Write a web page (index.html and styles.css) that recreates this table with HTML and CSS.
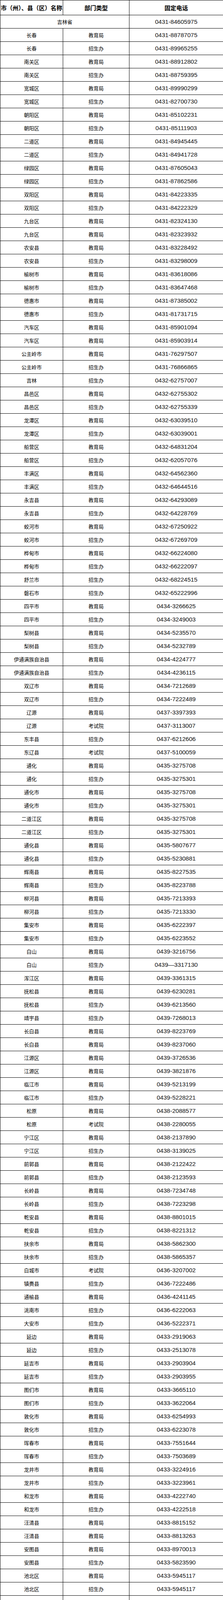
FILE: index.html
```html
<!DOCTYPE html>
<html lang="zh-CN">
<head>
<meta charset="utf-8">
<title>吉林省教育部门联系电话</title>
<link rel="stylesheet" href="styles.css">
</head>
<body>
<table class="contacts">
<colgroup><col class="c-name"><col class="c-dept"><col class="c-tel"></colgroup>
<thead>
<tr class="head"><th>市（州）、县（区）名称</th><th>部门类型</th><th>固定电话</th></tr>
</thead>
<tbody>
<tr><td colspan="2">吉林省</td><td class="tel">0431-84605975</td></tr>
<tr><td>长春</td><td>教育局</td><td class="tel">0431-88787075</td></tr>
<tr><td>长春</td><td>招生办</td><td class="tel">0431-89965255</td></tr>
<tr><td>南关区</td><td>教育局</td><td class="tel">0431-88912802</td></tr>
<tr><td>南关区</td><td>招生办</td><td class="tel">0431-88759395</td></tr>
<tr><td>宽城区</td><td>教育局</td><td class="tel">0431-89990299</td></tr>
<tr><td>宽城区</td><td>招生办</td><td class="tel">0431-82700730</td></tr>
<tr><td>朝阳区</td><td>教育局</td><td class="tel">0431-85102231</td></tr>
<tr><td>朝阳区</td><td>招生办</td><td class="tel">0431-85111903</td></tr>
<tr><td>二道区</td><td>教育局</td><td class="tel">0431-84945445</td></tr>
<tr><td>二道区</td><td>招生办</td><td class="tel">0431-84941728</td></tr>
<tr><td>绿园区</td><td>教育局</td><td class="tel">0431-87605043</td></tr>
<tr><td>绿园区</td><td>招生办</td><td class="tel">0431-87862586</td></tr>
<tr><td>双阳区</td><td>教育局</td><td class="tel">0431-84223335</td></tr>
<tr><td>双阳区</td><td>招生办</td><td class="tel">0431-84222329</td></tr>
<tr><td>九台区</td><td>教育局</td><td class="tel">0431-82324130</td></tr>
<tr><td>九台区</td><td>教育局</td><td class="tel">0431-82323932</td></tr>
<tr><td>农安县</td><td>教育局</td><td class="tel">0431-83228492</td></tr>
<tr><td>农安县</td><td>招生办</td><td class="tel">0431-83298009</td></tr>
<tr><td>榆树市</td><td>教育局</td><td class="tel">0431-83618086</td></tr>
<tr><td>榆树市</td><td>招生办</td><td class="tel">0431-83647468</td></tr>
<tr><td>德惠市</td><td>教育局</td><td class="tel">0431-87385002</td></tr>
<tr><td>德惠市</td><td>招生办</td><td class="tel">0431-81731715</td></tr>
<tr><td>汽车区</td><td>教育局</td><td class="tel">0431-85901094</td></tr>
<tr><td>汽车区</td><td>教育局</td><td class="tel">0431-85903914</td></tr>
<tr><td>公主岭市</td><td>教育局</td><td class="tel">0431-76297507</td></tr>
<tr><td>公主岭市</td><td>招生办</td><td class="tel">0431-76866865</td></tr>
<tr><td>吉林</td><td>招生办</td><td class="tel">0432-62757007</td></tr>
<tr><td>昌邑区</td><td>教育局</td><td class="tel">0432-62755302</td></tr>
<tr><td>昌邑区</td><td>招生办</td><td class="tel">0432-62755339</td></tr>
<tr><td>龙潭区</td><td>教育局</td><td class="tel">0432-63039510</td></tr>
<tr><td>龙潭区</td><td>招生办</td><td class="tel">0432-63039001</td></tr>
<tr><td>船营区</td><td>教育局</td><td class="tel">0432-64831204</td></tr>
<tr><td>船营区</td><td>招生办</td><td class="tel">0432-62057076</td></tr>
<tr><td>丰满区</td><td>教育局</td><td class="tel">0432-64562360</td></tr>
<tr><td>丰满区</td><td>招生办</td><td class="tel">0432-64644516</td></tr>
<tr><td>永吉县</td><td>教育局</td><td class="tel">0432-64293089</td></tr>
<tr><td>永吉县</td><td>招生办</td><td class="tel">0432-64228769</td></tr>
<tr><td>蛟河市</td><td>教育局</td><td class="tel">0432-67250922</td></tr>
<tr><td>蛟河市</td><td>招生办</td><td class="tel">0432-67269709</td></tr>
<tr><td>桦甸市</td><td>教育局</td><td class="tel">0432-66224080</td></tr>
<tr><td>桦甸市</td><td>招生办</td><td class="tel">0432-66222097</td></tr>
<tr><td>舒兰市</td><td>招生办</td><td class="tel">0432-68224515</td></tr>
<tr><td>磐石市</td><td>招生办</td><td class="tel">0432-65222996</td></tr>
<tr><td>四平市</td><td>教育局</td><td class="tel">0434-3266625</td></tr>
<tr><td>四平市</td><td>招生办</td><td class="tel">0434-3249003</td></tr>
<tr><td>梨树县</td><td>教育局</td><td class="tel">0434-5235570</td></tr>
<tr><td>梨树县</td><td>招生办</td><td class="tel">0434-5232789</td></tr>
<tr><td>伊通满族自治县</td><td>教育局</td><td class="tel">0434-4224777</td></tr>
<tr><td>伊通满族自治县</td><td>招生办</td><td class="tel">0434-4236115</td></tr>
<tr><td>双辽市</td><td>教育局</td><td class="tel">0434-7212689</td></tr>
<tr><td>双辽市</td><td>招生办</td><td class="tel">0434-7222489</td></tr>
<tr><td>辽源</td><td>教育局</td><td class="tel">0437-3397393</td></tr>
<tr><td>辽源</td><td>考试院</td><td class="tel">0437-3113007</td></tr>
<tr><td>东丰县</td><td>招生办</td><td class="tel">0437-6212606</td></tr>
<tr><td>东辽县</td><td>考试院</td><td class="tel">0437-5100059</td></tr>
<tr><td>通化</td><td>教育局</td><td class="tel">0435-3275708</td></tr>
<tr><td>通化</td><td>招生办</td><td class="tel">0435-3275301</td></tr>
<tr><td>通化市</td><td>教育局</td><td class="tel">0435-3275708</td></tr>
<tr><td>通化市</td><td>招生办</td><td class="tel">0435-3275301</td></tr>
<tr><td>二道江区</td><td>教育局</td><td class="tel">0435-3275708</td></tr>
<tr><td>二道江区</td><td>招生办</td><td class="tel">0435-3275301</td></tr>
<tr><td>通化县</td><td>教育局</td><td class="tel">0435-5807677</td></tr>
<tr><td>通化县</td><td>招生办</td><td class="tel">0435-5230881</td></tr>
<tr><td>辉南县</td><td>教育局</td><td class="tel">0435-8227535</td></tr>
<tr><td>辉南县</td><td>招生办</td><td class="tel">0435-8223788</td></tr>
<tr><td>柳河县</td><td>教育局</td><td class="tel">0435-7213393</td></tr>
<tr><td>柳河县</td><td>招生办</td><td class="tel">0435-7213330</td></tr>
<tr><td>集安市</td><td>教育局</td><td class="tel">0435-6222397</td></tr>
<tr><td>集安市</td><td>招生办</td><td class="tel">0435-6223552</td></tr>
<tr><td>白山</td><td>教育局</td><td class="tel">0439-3216756</td></tr>
<tr><td>白山</td><td>招生办</td><td class="tel">0439—3317130</td></tr>
<tr><td>浑江区</td><td>教育局</td><td class="tel">0439-3361315</td></tr>
<tr><td>抚松县</td><td>教育局</td><td class="tel">0439-6230281</td></tr>
<tr><td>抚松县</td><td>招生办</td><td class="tel">0439-6213560</td></tr>
<tr><td>靖宇县</td><td>招生办</td><td class="tel">0439-7268013</td></tr>
<tr><td>长白县</td><td>教育局</td><td class="tel">0439-8223769</td></tr>
<tr><td>长白县</td><td>教育局</td><td class="tel">0439-8237060</td></tr>
<tr><td>江源区</td><td>教育局</td><td class="tel">0439-3726536</td></tr>
<tr><td>江源区</td><td>教育局</td><td class="tel">0439-3821876</td></tr>
<tr><td>临江市</td><td>教育局</td><td class="tel">0439-5213199</td></tr>
<tr><td>临江市</td><td>招生办</td><td class="tel">0439-5228221</td></tr>
<tr><td>松原</td><td>教育局</td><td class="tel">0438-2088577</td></tr>
<tr><td>松原</td><td>考试院</td><td class="tel">0438-2280055</td></tr>
<tr><td>宁江区</td><td>教育局</td><td class="tel">0438-2137890</td></tr>
<tr><td>宁江区</td><td>招生办</td><td class="tel">0438-3139025</td></tr>
<tr><td>前郭县</td><td>教育局</td><td class="tel">0438-2122422</td></tr>
<tr><td>前郭县</td><td>招生办</td><td class="tel">0438-2123593</td></tr>
<tr><td>长岭县</td><td>教育局</td><td class="tel">0438-7234748</td></tr>
<tr><td>长岭县</td><td>招生办</td><td class="tel">0438-7223298</td></tr>
<tr><td>乾安县</td><td>教育局</td><td class="tel">0438-8801015</td></tr>
<tr><td>乾安县</td><td>招生办</td><td class="tel">0438-8221312</td></tr>
<tr><td>扶余市</td><td>教育局</td><td class="tel">0438-5862300</td></tr>
<tr><td>扶余市</td><td>招生办</td><td class="tel">0438-5865357</td></tr>
<tr><td>白城市</td><td>考试院</td><td class="tel">0436-3207002</td></tr>
<tr><td>镇赉县</td><td>招生办</td><td class="tel">0436-7222486</td></tr>
<tr><td>通榆县</td><td>教育局</td><td class="tel">0436-4241145</td></tr>
<tr><td>洮南市</td><td>招生办</td><td class="tel">0436-6222063</td></tr>
<tr><td>大安市</td><td>招生办</td><td class="tel">0436-5222371</td></tr>
<tr><td>延边</td><td>教育局</td><td class="tel">0433-2919063</td></tr>
<tr><td>延边</td><td>招生办</td><td class="tel">0433-2513078</td></tr>
<tr><td>延吉市</td><td>教育局</td><td class="tel">0433-2903904</td></tr>
<tr><td>延吉市</td><td>招生办</td><td class="tel">0433-2903955</td></tr>
<tr><td>图们市</td><td>教育局</td><td class="tel">0433-3665110</td></tr>
<tr><td>图们市</td><td>招生办</td><td class="tel">0433-3622064</td></tr>
<tr><td>敦化市</td><td>教育局</td><td class="tel">0433-6254993</td></tr>
<tr><td>敦化市</td><td>招生办</td><td class="tel">0433-6223078</td></tr>
<tr><td>珲春市</td><td>教育局</td><td class="tel">0433-7551644</td></tr>
<tr><td>珲春市</td><td>招生办</td><td class="tel">0433-7503689</td></tr>
<tr><td>龙井市</td><td>教育局</td><td class="tel">0433-3224916</td></tr>
<tr><td>龙井市</td><td>招生办</td><td class="tel">0433-3223961</td></tr>
<tr><td>和龙市</td><td>教育局</td><td class="tel">0433-4222740</td></tr>
<tr><td>和龙市</td><td>招生办</td><td class="tel">0433-4222518</td></tr>
<tr><td>汪清县</td><td>教育局</td><td class="tel">0433-8815152</td></tr>
<tr><td>汪清县</td><td>教育局</td><td class="tel">0433-8813263</td></tr>
<tr><td>安图县</td><td>教育局</td><td class="tel">0433-8970013</td></tr>
<tr><td>安图县</td><td>招生办</td><td class="tel">0433-5823590</td></tr>
<tr><td>池北区</td><td>教育局</td><td class="tel">0433-5945117</td></tr>
<tr><td>池北区</td><td>招生办</td><td class="tel">0433-5945117</td></tr>
<tr><td>梅河口市</td><td>招生办</td><td class="tel">0435-6069685</td></tr>
</tbody>
</table>
</body>
</html>
```
FILE: styles.css
```css
html, body {
  margin: 0;
  padding: 0;
  background: #fff;
}

.contacts {
  width: 572px;
  border-collapse: collapse;
  table-layout: fixed;
  font-family: "Noto Sans CJK SC", "Liberation Sans", sans-serif;
  color: #000;
}

.c-name { width: 161px; }
.c-dept { width: 170px; }
.c-tel { width: 241px; }

.contacts tr {
  height: 34px;
}

.contacts tr.head {
  height: 38px;
}

.contacts th,
.contacts td {
  border: 1px solid #000;
  padding: 0;
  text-align: center;
  vertical-align: middle;
  white-space: nowrap;
  line-height: 14px;
}

.contacts th {
  font-size: 15px;
  font-weight: bold;
}

.contacts td {
  font-size: 13px;
}

.contacts td.tel {
  font-family: "Liberation Sans Narrow", "Liberation Sans", sans-serif;
  font-size: 15.5px;
  color: #111;
}
```
